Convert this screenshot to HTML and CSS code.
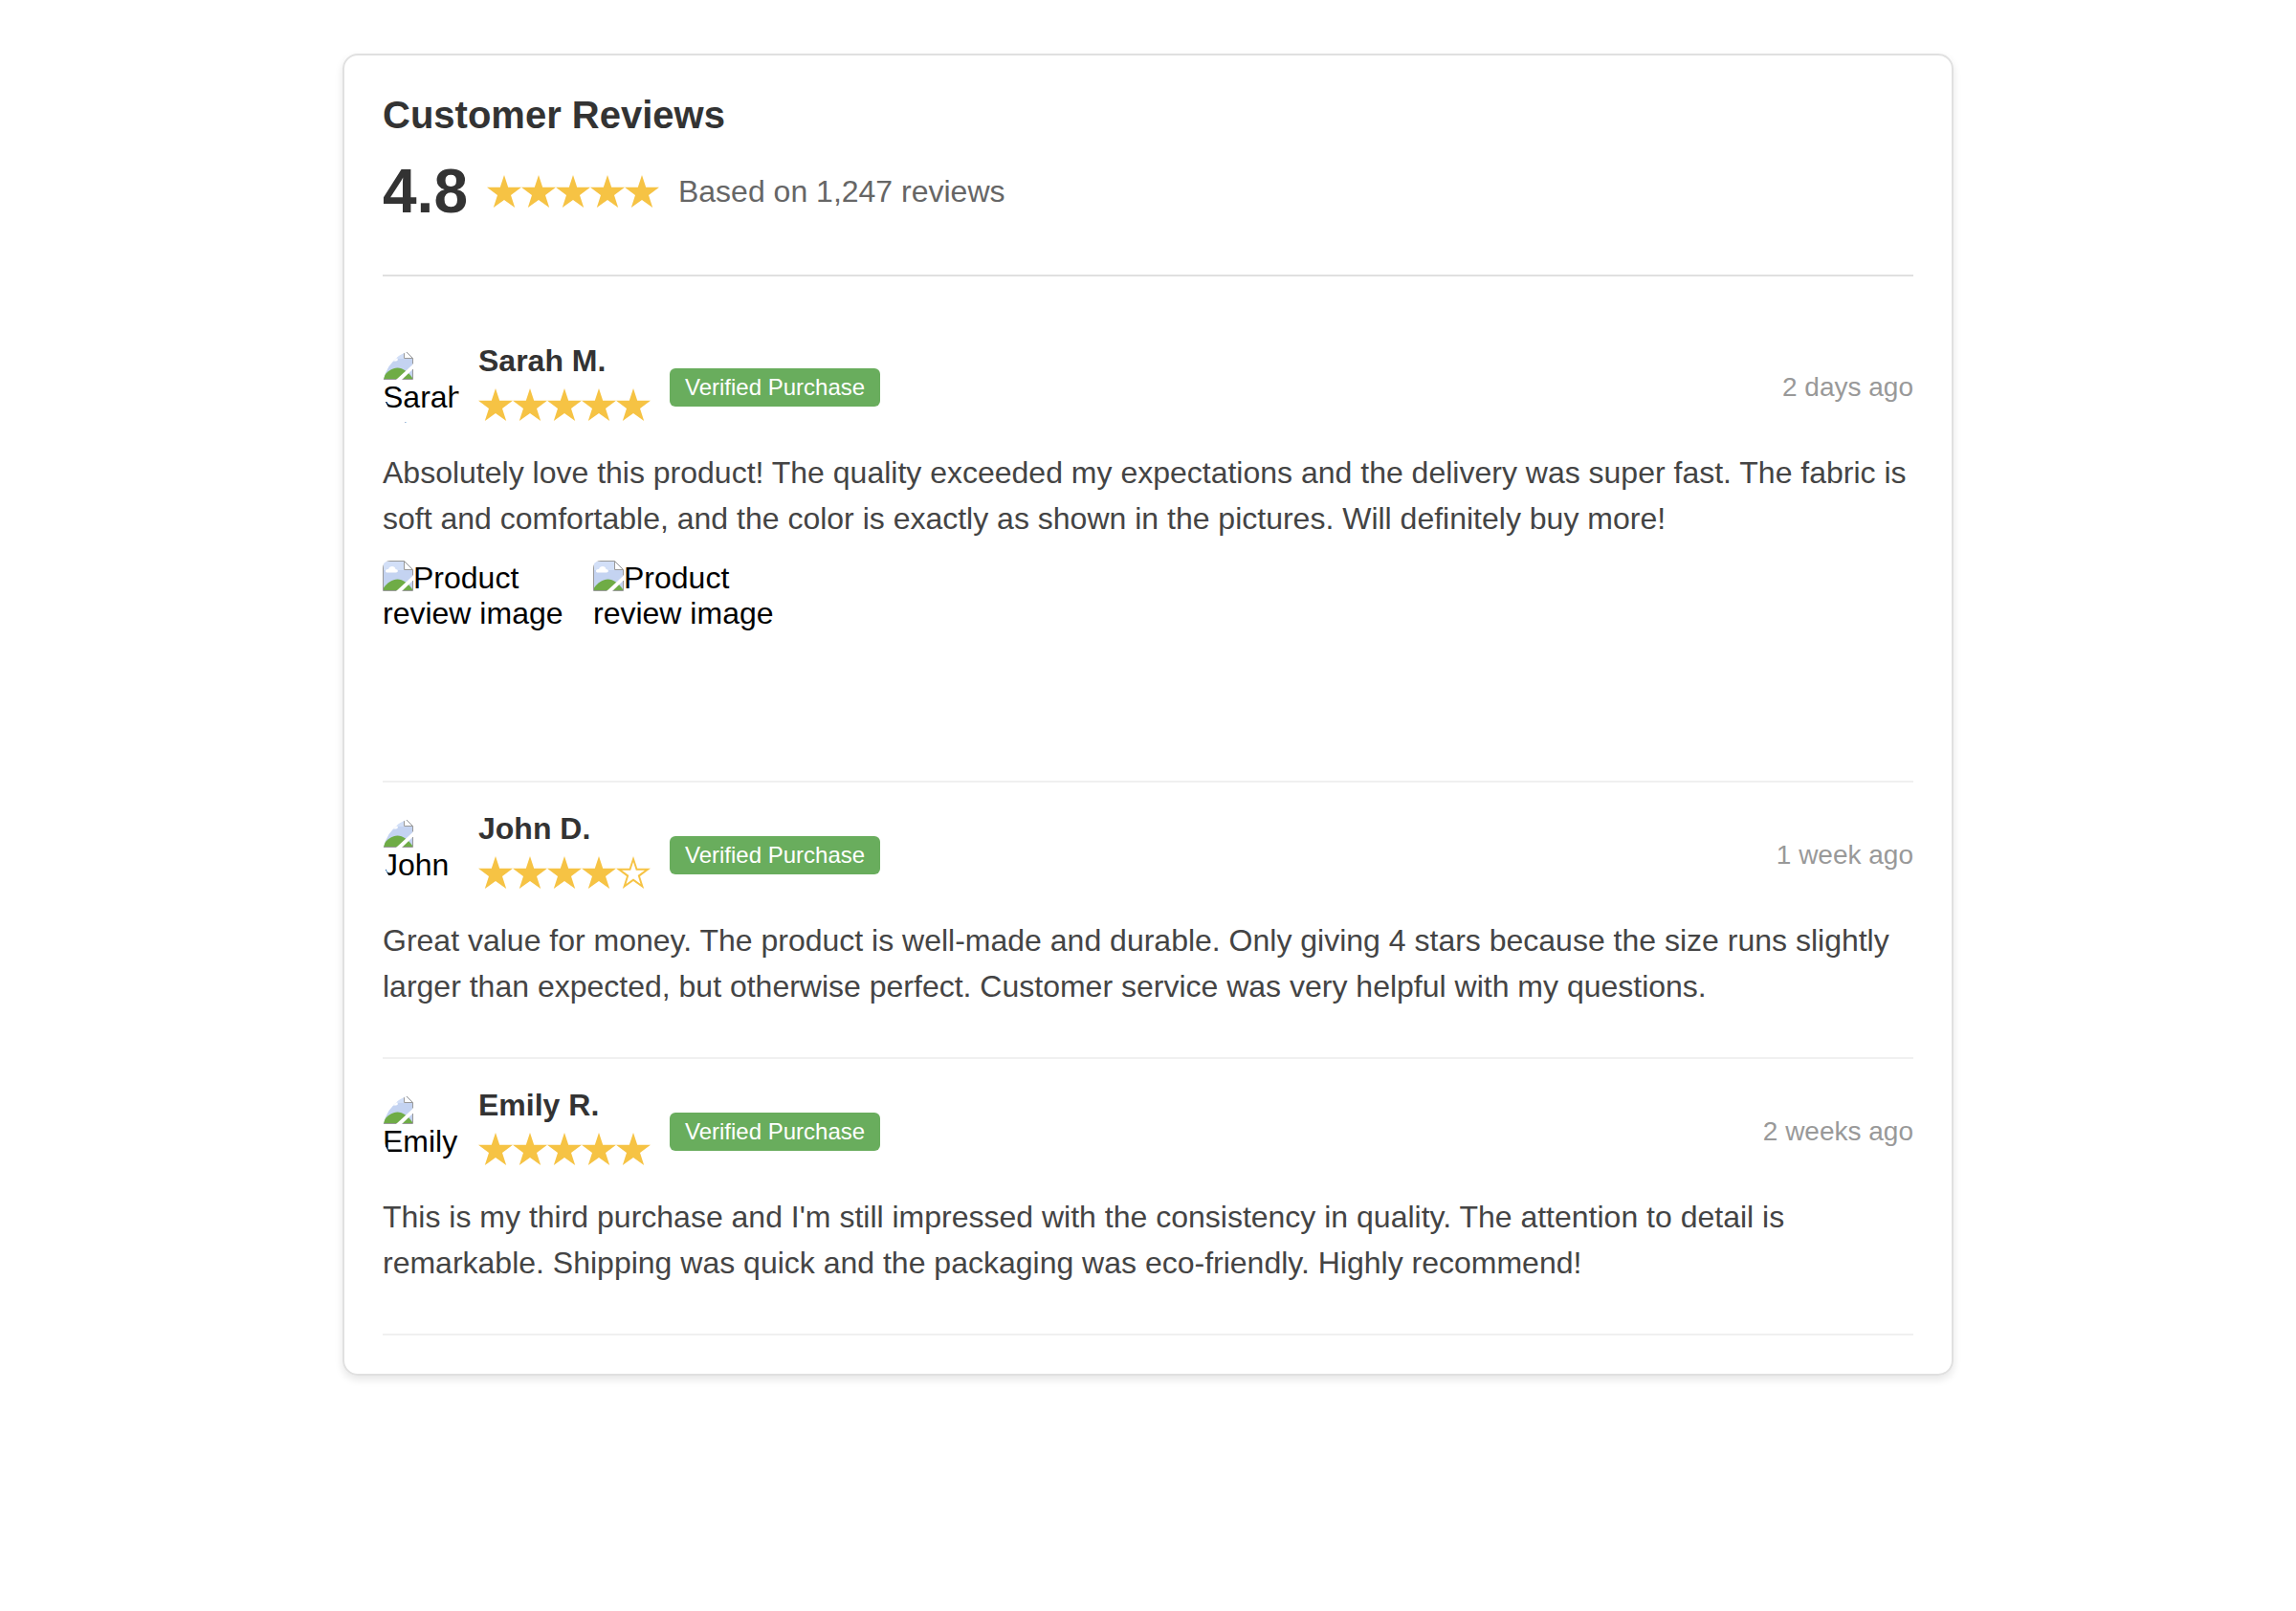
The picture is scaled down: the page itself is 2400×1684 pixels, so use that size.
FILE: index.html
```html
<!DOCTYPE html>
<html lang="en">
<head>
<meta charset="utf-8">
<title>Customer Reviews</title>
<link rel="stylesheet" href="styles.css">
</head>
<body>
<svg class="defs" aria-hidden="true">
  <symbol id="star" viewBox="0 0 36 34"><path d="M18 0 L22.2 12.8 H36 L25 20.9 L29.2 34 L18 26 L6.800 34 L11 20.900 L0 12.800 H13.800 Z"/></symbol>
  <symbol id="star-empty" viewBox="0 0 36 34"><path fill-rule="evenodd" d="M18 0 L22.2 12.8 H36 L25 20.9 L29.2 34 L18 26 L6.800 34 L11 20.900 L0 12.800 H13.800 Z M18 6 L15.200 14.700 H6 L13.300 20.100 L10.500 28.900 L18 23.500 L25.500 28.900 L22.700 20.100 L30 14.700 H20.800 Z"/></symbol>
  <symbol id="missing" viewBox="0 0 32 32">
    <path fill="#c4d3f1" d="M1 1H22L31 10V31H1Z"/>
    <path fill="#d2dff7" d="M1 1H22V10H1Z"/>
    <path fill="#fff" d="M5 12.500C2 12.500 2.500 8.500 6 9C7 5 13 5 13.500 9C16.500 9 16.500 12.500 14 12.500Z"/>
    <path fill="#6fac46" d="M1 31V28.500C5 23 10 19.500 15.500 19.500C21 19.500 27 24 31 30V31Z"/>
    <path fill="#fff" d="M14 32L32 15.500V20.500L20 32Z"/>
    <path fill="#fff" d="M22 1V10H31Z"/>
    <path fill="none" stroke="#999" d="M14.500 31.500H.5V.5H22.500L31.500 9.500V15.500M22.500 .5V9.500H31.500M31.500 21V31.500H20.500"/>
  </symbol>
</svg>
<main class="reviews">
  <header class="summary">
    <h1 class="title">Customer Reviews</h1>
    <div class="overall">
      <span class="score">4.8</span>
      <span class="stars" role="img" aria-label="5 out of 5 stars"><svg><use href="#star"/></svg><svg><use href="#star"/></svg><svg><use href="#star"/></svg><svg><use href="#star"/></svg><svg><use href="#star"/></svg></span>
      <span class="count">Based on 1,247 reviews</span>
    </div>
  </header>

  <article class="review">
    <div class="review-head">
      <div class="avatar"><svg class="missing"><use href="#missing"/></svg>Sarah M.</div>
      <div class="who">
        <h2 class="name">Sarah M.</h2>
        <span class="stars" role="img" aria-label="5 out of 5 stars"><svg><use href="#star"/></svg><svg><use href="#star"/></svg><svg><use href="#star"/></svg><svg><use href="#star"/></svg><svg><use href="#star"/></svg></span>
      </div>
      <span class="badge">Verified Purchase</span>
      <time class="date">2 days ago</time>
    </div>
    <p class="text">Absolutely love this product! The quality exceeded my expectations and the delivery was super fast. The fabric is soft and comfortable, and the color is exactly as shown in the pictures. Will definitely buy more!</p>
    <div class="photos">
      <div class="photo"><svg class="missing"><use href="#missing"/></svg>Product review image</div>
      <div class="photo"><svg class="missing"><use href="#missing"/></svg>Product review image</div>
    </div>
  </article>

  <article class="review">
    <div class="review-head">
      <div class="avatar"><svg class="missing"><use href="#missing"/></svg>John D.</div>
      <div class="who">
        <h2 class="name">John D.</h2>
        <span class="stars" role="img" aria-label="4 out of 5 stars"><svg><use href="#star"/></svg><svg><use href="#star"/></svg><svg><use href="#star"/></svg><svg><use href="#star"/></svg><svg><use href="#star-empty"/></svg></span>
      </div>
      <span class="badge">Verified Purchase</span>
      <time class="date">1 week ago</time>
    </div>
    <p class="text">Great value for money. The product is well-made and durable. Only giving 4 stars because the size runs slightly larger than expected, but otherwise perfect. Customer service was very helpful with my questions.</p>
  </article>

  <article class="review">
    <div class="review-head">
      <div class="avatar"><svg class="missing"><use href="#missing"/></svg>Emily R.</div>
      <div class="who">
        <h2 class="name">Emily R.</h2>
        <span class="stars" role="img" aria-label="5 out of 5 stars"><svg><use href="#star"/></svg><svg><use href="#star"/></svg><svg><use href="#star"/></svg><svg><use href="#star"/></svg><svg><use href="#star"/></svg></span>
      </div>
      <span class="badge">Verified Purchase</span>
      <time class="date">2 weeks ago</time>
    </div>
    <p class="text">This is my third purchase and I'm still impressed with the consistency in quality. The attention to detail is remarkable. Shipping was quick and the packaging was eco-friendly. Highly recommend!</p>
  </article>
</main>
</body>
</html>
```
FILE: styles.css
```css
* { box-sizing: border-box; }
body {
  margin: 0;
  padding: 56px 16px;
  background: #fff;
  color: #000;
  font: 32px/37px "Liberation Sans", Arial, sans-serif;
}
.defs {
  position: absolute;
  width: 0;
  height: 0;
}
.reviews {
  max-width: 1684px;
  margin: 0 auto;
  padding: 40px;
  border: 2px solid #e0e0e0;
  border-radius: 16px;
  box-shadow: 0 4px 8px rgba(0, 0, 0, 0.1);
}
.summary {
  padding-bottom: 50px;
  margin-bottom: 40px;
  border-bottom: 2px solid #e0e0e0;
}
.title {
  margin: 0 0 20px;
  color: #333;
  font-size: 40px;
  line-height: 45px;
}
.overall {
  display: flex;
  align-items: center;
  gap: 20px;
}
.score {
  color: #333;
  font-size: 64px;
  font-weight: bold;
  line-height: 74px;
}
.count { color: #666; }
.stars { display: flex; }
.stars svg {
  width: 36px;
  height: 34px;
  fill: #f6c344;
}
.review {
  padding: 30px 0;
  border-bottom: 2px solid #f0f0f0;
}
.review-head {
  display: flex;
  align-items: center;
  gap: 20px;
  min-height: 92px;
  margin-bottom: 19px;
}
.avatar {
  flex: none;
  width: 80px;
  height: 80px;
  overflow: hidden;
  border-radius: 50%;
}
.missing {
  float: left;
  width: 32px;
  height: 32px;
}
.who { align-self: flex-start; }
.name {
  margin: 0 0 10px;
  color: #333;
  font-size: 32px;
  line-height: 37px;
}
.badge {
  padding: 6px 16px;
  border-radius: 6px;
  background: #69ad5d;
  color: #fff;
  font-size: 24px;
  line-height: 28px;
}
.date {
  margin-left: auto;
  color: #999;
  font-size: 28px;
  line-height: 32px;
}
.text {
  margin: 0 0 20px;
  color: #444;
  line-height: 48px;
}
.photos {
  display: flex;
  gap: 20px;
}
.photo {
  width: 200px;
  height: 200px;
  overflow: hidden;
  border-radius: 8px;
}
```
